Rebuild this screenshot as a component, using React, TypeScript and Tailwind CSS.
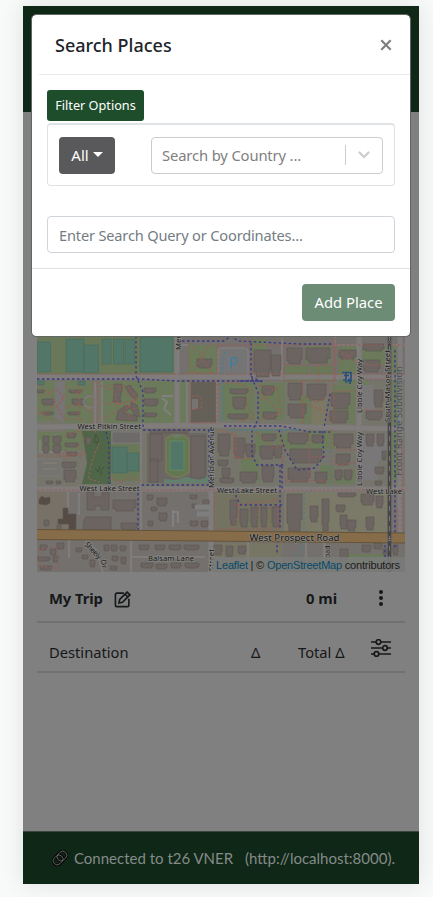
import React from "react";

type Rect = [number, number, number, number];

const pitches: Rect[] = [
  [37, 342, 13.5, 30], [66, 339, 18, 33], [84, 345, 14.5, 28], [102, 339, 9, 25], [113.5, 339, 10, 25], [125, 339, 9.5, 25],
  [140, 337, 33, 35], [37, 381, 7, 4], [78, 381, 7, 4], [112, 447, 15, 26], [127, 453, 12, 18],
];

const lawns: Rect[] = [
  [37, 336, 137, 38], [112, 444, 29, 37], [285, 366, 24, 15], [311, 366, 22, 15],
];

const grass: Rect[] = [
  [37, 381, 21, 40], [65, 381, 28, 42], [100, 381, 43, 42], [144, 381, 30, 42], [179, 381, 8, 42],
  [188, 345, 29, 29], [222, 383, 33, 37], [258, 383, 27, 37], [252, 339, 15, 14], [305, 346, 26, 18], [338, 344, 20, 40],
  [300, 395, 11, 28], [332, 385, 23, 38], [361, 346, 26, 20], [361, 376, 8, 10], [37, 432, 30, 20], [66, 430, 17, 20],
  [241, 458, 18, 24], [255, 431, 18, 23], [276, 433, 30, 16], [307, 431, 28, 18], [320, 465, 14, 19], [335, 470, 20, 14], [343, 554, 42, 10],
  [392, 345, 5, 135], [246, 513, 4, 14], [257, 512, 3, 14], [268, 510, 3, 16],
];

const buildings: Rect[] = [
  [42, 399, 12, 6], [72, 399, 13, 6], [37, 390, 7, 3], [69, 390, 13, 3], [43, 412, 10, 3], [68, 412, 12, 3], [144, 399, 14, 7], [144, 388, 12, 5], [144, 413, 13, 4],
  [43, 436, 6, 8], [53, 436, 8, 8], [43, 445, 6, 8], [53, 445, 8, 8], [67, 433, 9, 5], [65, 443, 13, 4], [67, 452, 10, 4], [86, 437, 5, 8],
  [62, 462, 14, 6], [64, 470, 12, 12], [46, 481, 7, 3], [56, 481, 5, 3], [113, 500, 23, 11], [121, 523, 16, 7], [44, 520, 5, 6], [57, 525, 4, 5],
  [147, 495, 6, 5], [151, 507, 6, 4], [148, 521, 5, 5], [157, 498, 10, 8], [159, 513, 8, 8], [190, 495, 7, 4], [192, 504, 5, 4], [190, 521, 8, 5], [201, 521, 7, 6], [203, 500, 6, 6],
  [197, 359, 15, 9], [254, 350, 17, 27], [271, 355, 10, 21], [262, 386, 12, 9], [263, 412, 14, 7], [230, 389, 18, 5], [233, 397, 13, 12], [228, 414, 20, 5],
  [287, 348, 15, 16], [306, 348, 24, 15], [339, 350, 17, 9], [363, 360, 17, 12], [288, 383, 14, 17], [307, 384, 19, 16], [331, 393, 19, 16],
  [288, 404, 18, 14], [330, 411, 18, 12], [374, 390, 9, 17], [288, 433, 20, 11], [312, 435, 12, 8], [334, 434, 19, 14], [366, 411, 16, 9],
  [218, 434, 12, 22], [234, 438, 11, 20], [246, 444, 9, 13], [262, 434, 14, 7], [260, 446, 14, 13], [274, 446, 8, 12], [218, 460, 10, 6], [222, 468, 8, 10], [220, 478, 14, 5],
  [240, 472, 17, 11], [262, 466, 12, 16], [290, 449, 32, 14], [288, 468, 22, 14], [315, 472, 12, 11], [336, 454, 14, 11], [335, 470, 7, 10], [344, 470, 8, 10],
  [230, 500, 7, 25], [240, 509, 8, 18], [251, 507, 7, 20], [261, 507, 6, 20], [272, 507, 8, 20], [287, 494, 15, 37], [310, 506, 8, 16],
  [322, 499, 7, 32], [336, 505, 9, 7], [340, 515, 7, 14], [347, 520, 9, 11], [361, 494, 13, 11], [376, 496, 7, 12], [366, 517, 8, 13], [338, 493, 18, 4],
  [375, 467, 9, 7], [382, 451, 4, 9], [375, 481, 7, 4], [366, 434, 8, 12], [377, 434, 7, 12], [363, 344, 21, 7],
  [340, 549, 8, 11], [362, 545, 9, 7], [374, 543, 8, 6], [383, 549, 5, 6], [155, 545, 10, 5], [169, 545, 12, 5], [184, 545, 15, 5], [139, 545, 10, 5],
  [214, 545, 8, 10], [226, 546, 7, 11], [238, 546, 8, 8], [141, 563, 12, 5], [156, 564, 11, 5], [171, 563, 10, 5], [185, 563, 14, 5],
  [40, 545, 7, 5], [50, 549, 6, 6], [57, 543, 7, 6], [38, 557, 12, 4], [53, 556, 5, 6], [76, 548, 6, 4], [82, 555, 6, 4], [90, 560, 5, 7],
  [111, 545, 6, 6], [120, 546, 6, 5], [112, 556, 6, 5], [121, 557, 5, 7], [104, 545, 5, 6], [110, 566, 7, 4], [40, 566, 12, 4], [393, 545, 5, 10],
];

const redPaths = [
  "M37 374H405", "M37 385l12 7 6 10-8 10-10 3M40 397l16-8 8 8-10 12M65 386l14 8 8-8M65 408l12-4 14 8M79 385v35M93 381v42M98 381v42M37 408l10 10 10 2M66 395l-9 12 8 12 18 1",
  "M101 385l14 6 2 20-15 9M119 388l16 12-10 10 8 12M103 404l14-2 20 8M110 385l18 2 10 13-22 4",
  "M37 456h28l10-3 6 4M65 435l15-4 4 8-6 8 8 7-20 3M66 450v10M64 452l-8 5M37 550l20-3 1 22-18-3v-15",
  "M95 430l4 13-7 18-4 18 12 3M110 478l10 4 12-5 9 4M37 490H405",
  "M189 343v30h28v-28M193 372l17-28M193 346l20 28M190 381v42h27v-43M192 396q13-2 9 12l-11 2",
  "M217 345H405M252 339v34M284 345v36h51v-45M334 345v78M285 365h50M318 365v18M217 384l18-2 18 8-7 12 8 16-15 3M258 385l20 4 3 24-22 7M261 400l18-14M260 392l22 22",
  "M303 382v42M328 384v12l-10 6-15-5M307 404l20 8 4 13M338 350l20 14M340 362l15-10M336 391h22M361 365h26M361 410h24M361 379h25",
  "M218 430l18 5v27M234 430v27l19 2M256 432l17 16 10-4M277 431l8 18-4 20 5 10M309 431v50M311 457h20l5 8 20-2M331 429v54M336 450h20M285 481h50",
  "M214 492V532M237 505l40-5 2 30M240 505l-5 20-8 5M258 505v24M270 504v24M217 529h63M398 510v35M402 440v90",
];

const bluePaths = [
  "M37 379H140L177 381H262M136 336V376L143 392V428M143 430H210M209 430V485H140M138 488V530M106 432L109 445V484",
  "M182 341H224L231 336 238 341 300 344H333M251 343V376L258 392V420L252 431V455L257 465H285",
  "M224 426H281L310 432H330M262 382l-12-6M240 381h23M330 394L324 428M279 430L285 450 297 470 315 468 324 456 322 430",
  "M236 490V497L241 505H283M280 465V530M395 350V548M385 545V570M277 540v15M282 466v23",
];

const streets = [
  "M37 377H405M37 427L210 425 405 429M37 489H405M177 336V427M211 427V572M359 336V490M400 336V535",
  "M141 430V534M131 540V572M131 557H205M69 539V558M68 492V510M79 493V515M84 539L96 550 103 572",
  "M40 440V452H64M55 434V453M95 382V424M102 382V424M179 345h9M187 382V424M217 380V424M282 338V380M237 532H282M248 535V570M306 540V570M324 540V570M335 336V345H405",
];

function CampusMap() {
  return (
    <svg viewBox="37 312 368 260" className="block h-[260px] w-[368px]" fontFamily="'Noto Sans', 'Open Sans', sans-serif">
      <rect x="37" y="312" width="368" height="260" fill="#73706e" />
      <rect x="37" y="381" width="368" height="107" fill="#75756b" />
      <rect x="284" y="492" width="103" height="42" fill="#7b7a69" />
      <rect x="37" y="492" width="31" height="40" fill="#777168" />
      <rect x="215" y="492" width="66" height="40" fill="#747361" />
      <rect x="214" y="543" width="68" height="28" fill="#777664" />
      {grass.map(([x, y, w, h], i) => <rect key={i} x={x} y={y} width={w} height={h} fill="#6c7a5c" />)}
      {lawns.map(([x, y, w, h], i) => <rect key={i} x={x} y={y} width={w} height={h} fill="#687858" />)}
      <path d="M82 431h29v53H82l5-21z" fill="#4f6748" />
      <path d="M147 433h60v50h-60z" fill="#6d6763" />
      <path d="M166 439q11-9 23 0v33q-12 10-23 0z" fill="#64784f" stroke="#75775a" strokeWidth="2" />
      <rect x="170" y="441" width="14" height="29" fill="#527667" stroke="#65866d" />
      <path d="M174 438q1-4 3-4t3 4M164 479l12 1 10-3 14 3 8-5v8h-44z" fill="#63806f" />
      <rect x="191" y="382" width="25" height="42" fill="#646057" />
      <path d="M192 399h6v10h-6" fill="#777371" />
      <rect x="218" y="348" width="30" height="29" rx="3" fill="#757575" stroke="#8b8181" />
      <path d="M112 432h31v11h-31z" fill="#6d6b69" stroke="#7c7878" />
      <rect x="312" y="400" width="14" height="25" fill="#7b7963" />
      <path d="M361 385h13v25h-13zM362 434h25v15l-9 13v18h-16z" fill="#797778" />
      <path d="M37 459h24v17H37z" fill="#757470" stroke="#7f7a75" />
      <path d="M43 463h14M43 469h14" stroke="#858178" />
      {pitches.map(([x, y, w, h], i) => <rect key={i} x={x} y={y} width={w} height={h} fill="#527668" stroke="#4a6b5e" strokeWidth=".7" />)}
      {streets.map((d, i) => <path key={i} d={d} fill="none" stroke="#807c7c" strokeWidth={i === 0 ? 5 : 2.2} />)}
      <g fill="#6c6460" stroke="#5d5551" strokeWidth=".6">
        {buildings.map(([x, y, w, h], i) => <path key={i} d={`M${x} ${y}h${w}v${h * 0.7}h-${w * 0.12}v${h * 0.3}h-${w * 0.75}v-${h * 0.2}h-${w * 0.13}z`} />)}
        <path d="M114 384h8v6l-2 8 1 4h-8l1-7zM125 387l5-2 8 10-2 5-5-4zM131 402l6 3 3 12-6-2-3-7zM118 411l8-6 5 3-8 5 14 3v5l-21-1z" />
        <path d="M87 492h7v5h8v-5h7v18h-8v-4h-6v4h-8zM84 520l2-3h25v13H83zM150 434h12v27h-12zM150 459h8v23h-8zM191 436h14v42h-14zM150 430h38v3h-38z" />
        <path d="M63 508h5v6h8v16h-7v-6H58v-5h5z" fill="#574c45" />
        <path d="M39 499l3-3 3 2 5-1v6l-4 2-7-1z" fill="#574c45" />
      </g>
      <path d="M59 382v38M57 389h8M57 400h8M57 410h8" stroke="#777575" strokeWidth="8" />
      <circle cx="90" cy="402" r="6" fill="none" stroke="#7e7978" strokeWidth="2" />
      <path d="M162 398l5 4-3 7 7 6M162 396h11M173 510v17M173 512h5v11" fill="none" stroke="#828080" strokeWidth="2" />
      <path d="M195 507h15M197 514h13" stroke="#7e7e7e" strokeWidth="5" />
      {redPaths.map((d, i) => <path key={i} d={d} fill="none" stroke="#985d57" strokeWidth="1.1" strokeDasharray="2.5 1.9" />)}
      {bluePaths.map((d, i) => <path key={i} d={d} fill="none" stroke="#3a3884" strokeWidth="1.3" strokeDasharray="2.4 2.6" />)}
      <path d="M225 352l-4 22M222 382v40M230 430H300M304 492V545L296 558M330 450v36M398 370v60" fill="none" stroke="#527d87" strokeWidth="1.8" strokeDasharray="2.5 2.5" />
      <path d="M37 534.500L210 536 405 538" fill="none" stroke="#655338" strokeWidth="11" />
      <path d="M37 534.500L210 536 405 538" fill="none" stroke="#876c4a" strokeWidth="9" />
      <path d="M389.5 336V572" stroke="#464646" strokeWidth="3.5" />
      <path d="M389.5 336V572" stroke="#777" strokeWidth="1" strokeDasharray="5 5" />
      <path d="M386 536l7 7m0-7l-7 7M386 339l7 7m0-7l-7 7" stroke="#666" />
      <path d="M342 372.500h9v7h-3M344 375.500h5M346 373v7h-3M347 381h5M350 379v5M345 382h2" stroke="#28527b" strokeWidth="1.7" fill="none" />
      <path d="M94 442l2-8 3 8zM97 442v3M95 468l3 4 2-6M101 475v-5l3-3" fill="none" stroke="#405339" />
      <text x="228" y="368.500" fontSize="16" fontWeight="500" fill="#477d9a">P</text>
      <g fill="#151515" stroke="#8b8b88" strokeWidth="1.2" paintOrder="stroke" fontSize="7.7">
        <text x="77.500" y="428.500" textLength="63.500">West Pitkin Street</text>
        <text x="79.500" y="491" textLength="60">West Lake Street</text>
        <text x="217" y="492.500" textLength="60">West Lake Street</text>
        <text x="366" y="493.500" textLength="36">West Lake</text>
        <text x="148" y="560.500" textLength="46">Balsam Lane</text>
        <text x="249.500" y="541" fontSize="9.600" textLength="90">West Prospect Road</text>
        <text transform="translate(181 350) rotate(-90)" textLength="32">Meridian</text>
        <text transform="translate(214 488) rotate(-90)" textLength="61">Meridian Avenue</text>
        <text transform="translate(214 571) rotate(-90)" textLength="22">Street</text>
        <text transform="translate(362 413) rotate(-90)" textLength="54">Libbie Coy Way</text>
        <text transform="translate(362 486) rotate(-90)" textLength="54">Libbie Coy Way</text>
        <text transform="translate(390 422) rotate(-90)" textLength="72">South Mason Street</text>
        <text transform="translate(84 545) rotate(45)" textLength="21">Sheely</text>
        <text transform="translate(100.500 560) rotate(80)">Dr</text>
        <text transform="translate(330 558) rotate(-90)" fontSize="7">oad</text>
      </g>
      <text transform="translate(402 476) rotate(-90)" fontSize="9.500" fill="#505050" textLength="110">Front Range Subdivision</text>
    </svg>
  );
}

function LinkIcon() {
  return (
    <svg viewBox="0 0 18 18" className="mr-[5px] h-[18px] w-[18px]" fill="none">
      <g transform="rotate(-45 9 9)">
        <rect x="1" y="5" width="10.500" height="8" rx="4" stroke="#050505" strokeWidth="2.800" />
        <rect x="6.500" y="5" width="10.500" height="8" rx="4" stroke="#050505" strokeWidth="2.800" />
        <rect x="1" y="5" width="10.500" height="8" rx="4" stroke="#777" strokeWidth=".8" />
        <rect x="6.500" y="5" width="10.500" height="8" rx="4" stroke="#777" strokeWidth=".8" />
      </g>
    </svg>
  );
}

function TripTable() {
  return (
    <div className="mx-[14px] text-[#161819]">
      <div className="flex h-[51px] items-center border-b-2 border-[#707172] pt-[3px] pl-3 text-[14.8px] font-bold">
        <span className="w-[65px] whitespace-nowrap tracking-[-0.1px]">My Trip</span>
        <svg viewBox="0 0 24 24" className="mt-0.5 h-[17px] w-[17px]" fill="none" stroke="currentColor" strokeWidth="2.300">
          <path d="M14 3H4a2 2 0 0 0-2 2v15a2 2 0 0 0 2 2h15a2 2 0 0 0 2-2V11M7 17l1-5L18.500 1.500l4 4L12 16zM15.500 4.500l4 4" />
        </svg>
        <span className="ml-auto w-[72px] whitespace-nowrap">0 mi</span>
        <svg viewBox="0 0 6 18" className="mr-[21px] h-[18px] w-[6px]" fill="currentColor"><circle cx="3" cy="3" r="2" /><circle cx="3" cy="9" r="2" /><circle cx="3" cy="15" r="2" /></svg>
      </div>
      <div className="flex h-[50px] items-center border-b-2 border-[#707172] pt-0.5 pl-3 text-[14.7px]">
        <span className="w-[202px] pt-2">Destination</span>
        <span className="w-[47px] pt-2">Δ</span>
        <span className="w-[73px] pt-2 whitespace-nowrap">Total Δ</span>
        <svg viewBox="0 0 20 18" className="h-[18px] w-5" fill="#808080" stroke="currentColor" strokeWidth="1.700"><path d="M0 3h20M0 9h20M0 15h20" /><circle cx="7.500" cy="3" r="2.300" /><circle cx="14" cy="9" r="2.300" /><circle cx="5.500" cy="15" r="2.300" /></svg>
      </div>
    </div>
  );
}

function SearchDialog() {
  return (
    <section className="absolute top-[8px] left-[8px] flex h-[323px] w-[380px] flex-col rounded-[5px] border border-[#626763] bg-white bg-clip-padding text-[#212529]">
      <header className="ml-[7px] flex h-[60px] shrink-0 items-center justify-between border-b border-[#e9ecef] pr-[18px] pl-[16px]">
        <h1 className="pt-0.5 text-[18px] font-medium">Search Places</h1>
        <svg viewBox="0 0 12 12" className="h-3 w-3" stroke="#7f7f7f" strokeWidth="2.200"><path d="M1.300 1.300l9.400 9.400M10.700 1.300l-9.400 9.400" /></svg>
      </header>
      <div className="flex h-[194px] shrink-0 flex-col items-start border-b border-[#dee2e6] px-[15px] pt-[15px]">
        <button className="h-[31px] w-[97px] rounded-[3px] bg-[#1e4d2b] pt-px text-[12.7px] whitespace-nowrap text-white">Filter Options</button>
        <div className="mt-[2px] flex h-[63px] w-[348px] items-center justify-between rounded-[4px] border border-t-2 border-[#dfe3e5] px-[11px]">
          <button className="flex h-[37px] w-[56px] items-center justify-center gap-1 rounded-[4px] bg-[#59595b] text-[15px] text-white">All<i className="mb-px border-x-[5px] border-t-[5px] border-x-transparent border-t-white" /></button>
          <div className="flex h-[37px] w-[232px] items-center rounded-[4px] border border-[#ccc] pl-[10px] text-[14.8px] tracking-[-0.15px] text-[#808080]">
            <span className="flex-1 pt-px whitespace-nowrap">Search by Country ...</span>
            <span className="h-5 w-px bg-[#ccc]" />
            <svg viewBox="0 0 12 8" className="mx-[12px] h-2 w-3" fill="none" stroke="#ccc" strokeWidth="2.200" strokeLinecap="round"><path d="M1.500 1.500L6 6l4.500-4.500" /></svg>
          </div>
        </div>
        <input className="mt-[30px] h-[37px] w-[348px] rounded-[4px] border border-[#ced4da] px-[11px] text-[14.6px] tracking-[-0.17px] placeholder:text-[#747c83]" placeholder="Enter Search Query or Coordinates..." />
      </div>
      <footer className="flex flex-1 items-center justify-end pr-[15px]">
        <button className="h-[37px] w-[93px] rounded-[4px] bg-[#6c8c75] text-[14.8px] whitespace-nowrap text-white">Add Place</button>
      </footer>
    </section>
  );
}

export default function App() {
  return (
    <main className="h-[897px] w-[433px] overflow-hidden bg-[#f8faf9] pt-[6px] pl-[23px] font-['Noto_Sans','Open_Sans',sans-serif]">
      <div className="relative flex h-[878px] w-[396px] flex-col bg-[#808080] shadow-[0_0_22px_rgba(0,0,0,0.10)]">
        <div className="h-[106px] shrink-0 bg-[#0f2717]" />
        <div className="mx-[14px] mt-[200px] h-[260px] shrink-0">
          <CampusMap />
          <div className="relative -mt-[15px] ml-auto flex h-[15px] w-[194px] items-center justify-center bg-[#7b7d7b]/80 pt-px font-['Liberation_Sans',Arial,sans-serif] text-[11px] tracking-[-0.2px] whitespace-pre text-[#1c1c1c]"><span className="text-[#064a68]">Leaflet</span> | © <span className="text-[#064a68]">OpenStreetMap</span> contributors</div>
        </div>
        <TripTable />
        <footer className="mt-auto flex h-[53px] shrink-0 items-center border-t border-[#3c493f] bg-[#0f2717] pl-[28px] font-['Lato',sans-serif] text-[15px] whitespace-nowrap text-[#858b87]">
          <LinkIcon />
          <span className="w-[171px]">Connected to t26 VNER</span>
          <span>(http://localhost:8000).</span>
        </footer>
        <SearchDialog />
      </div>
    </main>
  );
}
